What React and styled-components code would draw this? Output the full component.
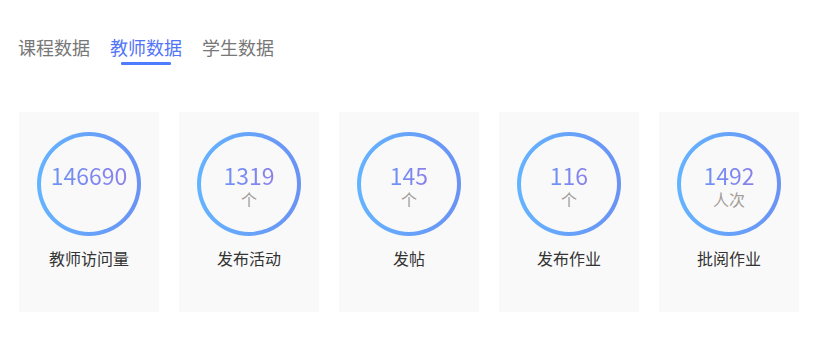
import React, { useState } from "react";
import styled, { createGlobalStyle } from "styled-components";

const Global = createGlobalStyle`
  html, body { margin: 0; padding: 0; background: #fff; }
  body { font-family: "Noto Sans CJK SC", "Noto Sans", sans-serif; }
`;

const Page = styled.div`
  padding-top: 35px;
`;

const Tabs = styled.div`
  display: flex;
  gap: 20px;
  padding: 0 18px;
`;

const Tab = styled.div`
  position: relative;
  font-size: 18px;
  line-height: 24px;
  height: 30px;
  color: ${(p) => (p.$active ? "#5275f7" : "#777")};
  cursor: pointer;
  &::after {
    content: "";
    display: ${(p) => (p.$active ? "block" : "none")};
    position: absolute;
    left: 50%;
    bottom: 0;
    width: 50px;
    height: 3px;
    margin-left: -25px;
    background: #4e7bff;
    border-radius: 1px;
  }
`;

const Cards = styled.div`
  display: flex;
  gap: 20px;
  padding: 0 19px;
  margin-top: 47px;
`;

const Card = styled.div`
  width: 140px;
  height: 200px;
  box-sizing: border-box;
  background: #f9f9f9;
  display: flex;
  flex-direction: column;
  align-items: center;
  padding-top: 20px;
`;

const Ring = styled.div`
  width: 104px;
  height: 104px;
  box-sizing: border-box;
  border-radius: 50%;
  border: 4px solid transparent;
  background: linear-gradient(#f9f9f9, #f9f9f9) padding-box,
    linear-gradient(90deg, #63b4ff, #6b92f4) border-box;
  display: flex;
  flex-direction: column;
  align-items: center;
  padding-top: 27px;
`;

const Num = styled.div`
  font-size: 23px;
  line-height: 24px;
  background: linear-gradient(90deg, #6d92f6, #8a7fea);
  -webkit-background-clip: text;
  background-clip: text;
  color: transparent;
`;

const Unit = styled.div`
  margin-top: 2px;
  font-size: 16px;
  line-height: 20px;
  height: 20px;
  color: #a39d99;
`;

const Label = styled.div`
  margin-top: 11px;
  font-size: 16px;
  line-height: 22px;
  color: #333;
`;

const stats = [
  { num: "146690", unit: "", label: "教师访问量" },
  { num: "1319", unit: "个", label: "发布活动" },
  { num: "145", unit: "个", label: "发帖" },
  { num: "116", unit: "个", label: "发布作业" },
  { num: "1492", unit: "人次", label: "批阅作业" },
];

export default function App() {
  const [active, setActive] = useState(1);
  const tabs = ["课程数据", "教师数据", "学生数据"];
  return (
    <Page>
      <Global />
      <Tabs>
        {tabs.map((t, i) => (
          <Tab key={t} $active={i === active} onClick={() => setActive(i)}>
            {t}
          </Tab>
        ))}
      </Tabs>
      <Cards>
        {stats.map((s) => (
          <Card key={s.label}>
            <Ring>
              <Num>{s.num}</Num>
              <Unit>{s.unit}</Unit>
            </Ring>
            <Label>{s.label}</Label>
          </Card>
        ))}
      </Cards>
    </Page>
  );
}
